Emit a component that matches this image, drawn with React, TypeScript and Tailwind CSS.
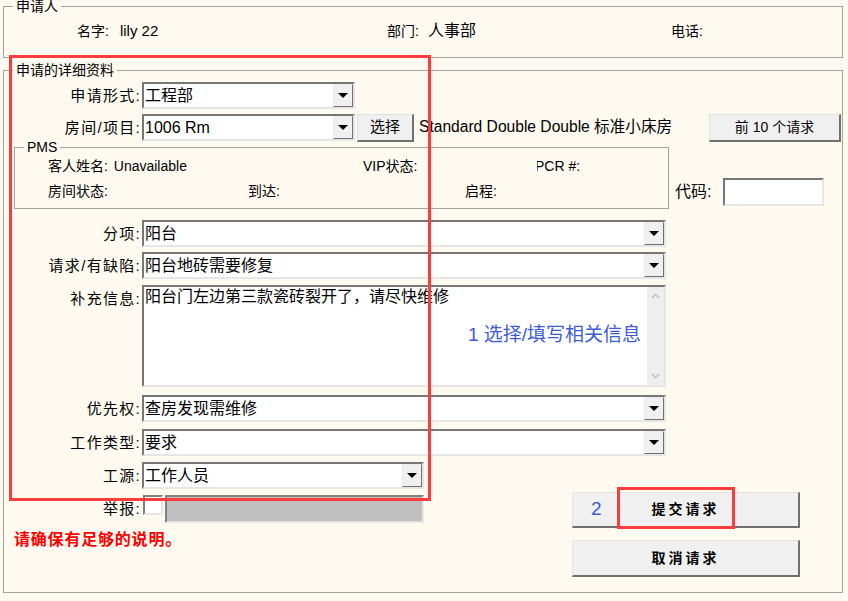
import React from 'react';

const FONT = "font-['Liberation_Sans','Noto_Sans_CJK_SC',sans-serif]";

function Arrow() {
  return (
    <div className="flex h-full w-[20px] shrink-0 items-center justify-center border border-t-[#ececec] border-l-[#ececec] border-r-[#707070] border-b-[#707070] bg-[#f0f0f0]">
      <svg width="10" height="5" viewBox="0 0 10 5">
        <path d="M0 0H10L5 5Z" fill="#000" />
      </svg>
    </div>
  );
}

function Select({ className, value }: { className: string; value: string }) {
  return (
    <div
      className={`flex h-[27px] shrink-0 border-2 border-t-[#777777] border-l-[#777777] border-r-[#e6e6e6] border-b-[#e6e6e6] bg-white ${className}`}
    >
      <div className="flex-1 overflow-hidden whitespace-nowrap pl-[1px] text-[16px] leading-[23px]">{value}</div>
      <Arrow />
    </div>
  );
}

function Label({ children }: { children: React.ReactNode }) {
  return (
    <div className="flex h-[27px] w-[138px] shrink-0 items-center justify-end pr-[1px] text-[15px] leading-[20px] tracking-[1.3px] whitespace-nowrap">
      {children}
    </div>
  );
}

function Btn({ className, children }: { className: string; children: React.ReactNode }) {
  return (
    <div
      className={`flex shrink-0 items-center justify-center border border-t-[#e2e2e2] border-l-[#e2e2e2] border-r-2 border-b-2 border-r-[#707070] border-b-[#707070] bg-[#f0f0f0] ${className}`}
    >
      {children}
    </div>
  );
}

function Chevron({ up }: { up?: boolean }) {
  return (
    <svg width="9" height="6" viewBox="0 0 9 6">
      <path d={up ? 'M1 5L4.5 1.5L8 5' : 'M1 1L4.5 4.5L8 1'} fill="none" stroke="#c4c4c4" strokeWidth="1.6" />
    </svg>
  );
}

export default function App() {
  return (
    <div className={`relative h-[601px] w-[848px] overflow-hidden bg-[#fefaf0] px-[3px] text-black ${FONT}`}>
      {/* 申请人 */}
      <fieldset className="w-[840px] border border-[#a3a3a3]">
        <legend className="ml-[9px] px-[3px] text-[14px] leading-[13px]">申请人</legend>
        <div className="flex h-[44px] pl-[73px] pt-[9px] text-[14px] leading-[18px]">
          <div className="flex w-[310px]">
            <span>名字:</span>
            <span className="ml-[11px] text-[15px]">lily 22</span>
          </div>
          <div className="flex w-[284px]">
            <span>部门:</span>
            <span className="ml-[9px] text-[16px]">人事部</span>
          </div>
          <div>电话:</div>
        </div>
      </fieldset>

      {/* 申请的详细资料 */}
      <fieldset className="mt-[5px] w-[840px] border border-[#a3a3a3] pb-[15px]">
        <legend className="ml-[9px] px-[3px] text-[14px] leading-[14px]">申请的详细资料</legend>
        <div className="flex flex-col pt-[5px]">
          <div className="flex items-start">
            <Label>申请形式:</Label>
            <Select className="w-[213px]" value="工程部" />
          </div>

          <div className="mt-[5px] flex items-start">
            <Label>房间/项目:</Label>
            <Select className="w-[213px]" value="1006 Rm" />
            <Btn className="ml-[2px] h-[28px] w-[57px] text-[15px]">选择</Btn>
            <div className="ml-[5px] whitespace-nowrap text-[15.6px] leading-[26px]">Standard Double Double 标准小床房</div>
            <Btn className="ml-auto mr-[1px] h-[28px] w-[132px] text-[14px]">前 10 个请求</Btn>
          </div>

          <div className="-mt-[1px] flex items-start">
            <fieldset className="ml-[10px] w-[655px] border border-[#a3a3a3] pb-[5px] text-[14px]">
              <legend className="ml-[9px] px-[3px] text-[14px] leading-[13px]">PMS</legend>
              <div className="flex h-[25px] items-center pl-[33px] whitespace-nowrap">
                <div className="w-[315px]">
                  客人姓名: <span className="ml-[2px]">Unavailable</span>
                </div>
                <div className="w-[174px]">VIP状态:</div>
                <div className="overflow-hidden">
                  <div className="-ml-[2px]">PCR #:</div>
                </div>
              </div>
              <div className="flex h-[24px] items-center pl-[33px] whitespace-nowrap">
                <div className="w-[200px]">房间状态:</div>
                <div className="w-[217px]">到达:</div>
                <div>启程:</div>
              </div>
            </fieldset>
            <div className="ml-[6px] mt-[37px] flex h-[28px] items-center">
              <span className="text-[16px] leading-[20px]">代码:</span>
              <div className="ml-[12px] h-[28px] w-[101px] border-2 border-t-[#777777] border-l-[#777777] border-r-[#e6e6e6] border-b-[#e6e6e6] bg-white" />
            </div>
          </div>

          <div className="mt-[11px] flex items-start">
            <Label>分项:</Label>
            <Select className="w-[524px]" value="阳台" />
          </div>
          <div className="mt-[5px] flex items-start">
            <Label>请求/有缺陷:</Label>
            <Select className="w-[524px]" value="阳台地砖需要修复" />
          </div>

          <div className="mt-[6px] flex items-start">
            <Label>补充信息:</Label>
            <div className="flex h-[102px] w-[524px] border-2 border-t-[#777777] border-l-[#777777] border-r-[#e6e6e6] border-b-[#e6e6e6] bg-white">
              <div className="flex flex-1 flex-col">
                <div className="pl-[1px] text-[16px] leading-[20px] whitespace-nowrap">阳台门左边第三款瓷砖裂开了，请尽快维修</div>
                <div className="mt-[16px] pr-[6px] text-right text-[19px] leading-[24px] text-[#3d5bd6] whitespace-nowrap">1 选择/填写相关信息</div>
              </div>
              <div className="flex w-[17px] flex-col items-center justify-between bg-[#eeeeee] py-[6px]">
                <Chevron up />
                <Chevron />
              </div>
            </div>
          </div>

          <div className="mt-[8px] flex items-start">
            <Label>优先权:</Label>
            <Select className="w-[524px]" value="查房发现需维修" />
          </div>
          <div className="mt-[7px] flex items-start">
            <Label>工作类型:</Label>
            <Select className="w-[524px]" value="要求" />
          </div>
          <div className="mt-[6px] flex items-start">
            <Label>工源:</Label>
            <Select className="w-[282px]" value="工作人员" />
          </div>

          <div className="flex items-start">
            <div className="flex w-[420px] flex-col">
              <div className="mt-[6px] flex items-start">
                <Label>举报:</Label>
                <div className="ml-[1px] h-[20px] w-[20px] border-2 border-t-[#808080] border-l-[#808080] border-r-[#e6e6e6] border-b-[#e6e6e6] bg-white" />
                <div className="ml-[2px] h-[28px] w-[260px] border-2 border-t-[#808080] border-l-[#808080] border-r-[#e6e6e6] border-b-[#e6e6e6] bg-[#c0c0c0]" />
              </div>
              <div className="ml-[10px] mt-[8px] text-[16px] font-bold leading-[18px] tracking-[0.8px] text-[#ff0000]">请确保有足够的说明。</div>
            </div>
            <div className="ml-[148px] flex flex-col">
              <Btn className="relative mt-[3px] h-[36px] w-[228px] text-[14px] font-bold tracking-[3px]">
                <span className="absolute left-[18px] top-[6px] text-[19px] font-normal leading-[20px] tracking-normal text-[#3d5bd6]">2</span>
                提交请求
              </Btn>
              <Btn className="mt-[12px] h-[37px] w-[228px] text-[14px] font-bold tracking-[3px]">取消请求</Btn>
            </div>
          </div>
        </div>
      </fieldset>

      {/* annotation rectangles */}
      <div className="pointer-events-none absolute left-[9px] top-[55px] h-[446px] w-[422px] border-[3px] border-[#fb3d3d]" />
      <div className="pointer-events-none absolute left-[617px] top-[487px] h-[42px] w-[118px] border-[3px] border-[#fb3d3d]" />
    </div>
  );
}
